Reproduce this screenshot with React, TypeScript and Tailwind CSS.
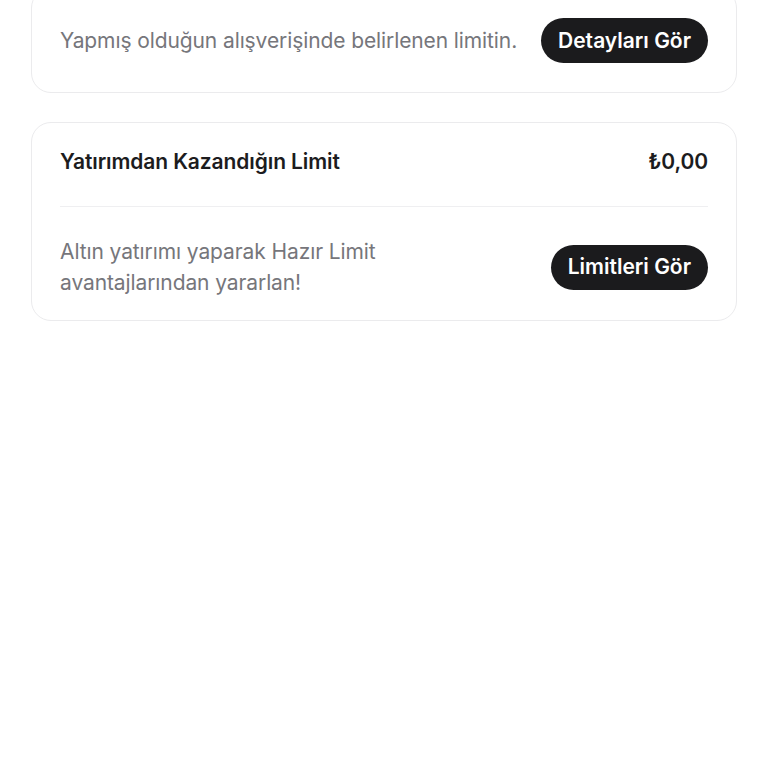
import React from "react";

const font = { fontFamily: "Inter, 'Noto Sans', sans-serif" };

const PillButton: React.FC<{ label: string }> = ({ label }) => (
  <button
    type="button"
    className="h-[45px] px-[17px] rounded-full bg-[#1b1b1d] text-white text-[21px] font-semibold whitespace-nowrap shrink-0"
  >
    {label}
  </button>
);

export default function App() {
  return (
    <div className="min-h-[768px] bg-white px-[31px]" style={font}>
      {/* Card cut off at top */}
      <div className="-mt-[12px] rounded-[20px] border border-[#ebebed] bg-white px-[28px] pt-[29px] pb-[29px]">
        <div className="flex items-center justify-between gap-4">
          <p className="text-[21px] text-[#76767b] tracking-[-0.1px]">
            Yapmış olduğun alışverişinde belirlenen limitin.
          </p>
          <PillButton label="Detayları Gör" />
        </div>
      </div>

      {/* Investment limit card */}
      <div className="mt-[29px] rounded-[20px] border border-[#ebebed] bg-white px-[28px] pt-[25px] pb-[22px]">
        <div className="flex items-center justify-between h-[28px]">
          <span className="text-[21px] font-semibold text-[#1c1c1e] tracking-[-0.1px]">
            Yatırımdan Kazandığın Limit
          </span>
          <span className="text-[21px] font-semibold text-[#1c1c1e] tracking-[-0.1px]">
            ₺0,00
          </span>
        </div>
        <div className="mt-[30px] h-px bg-[#efeff1]" />
        <div className="mt-[29px] flex items-center justify-between gap-4">
          <p className="text-[21px] leading-[31px] text-[#76767b] tracking-[-0.1px] max-w-[340px]">
            Altın yatırımı yaparak Hazır Limit avantajlarından yararlan!
          </p>
          <PillButton label="Limitleri Gör" />
        </div>
      </div>
    </div>
  );
}
